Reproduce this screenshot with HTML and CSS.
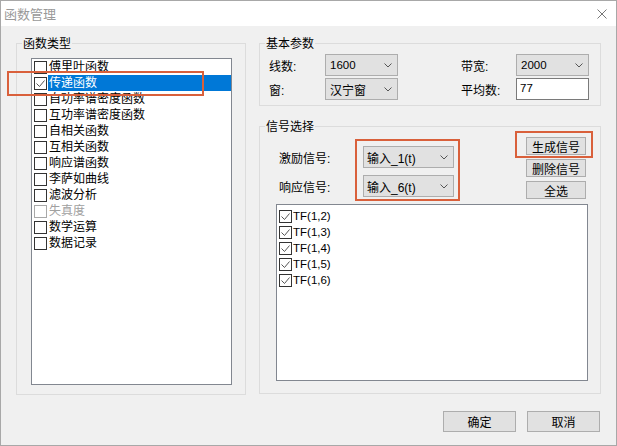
FILE: index.html
```html
<!DOCTYPE html>
<html lang="zh-CN">
<head>
<meta charset="utf-8">
<title>函数管理</title>
<link rel="stylesheet" href="styles.css">
</head>
<body>
<div class="window">
  <div class="titlebar">
    <span class="title">函数管理</span>
    <svg class="close" width="10" height="10" viewBox="0 0 10 10"><path d="M0.5 0.5 L9.5 9.5 M9.5 0.5 L0.5 9.5" stroke="#777" stroke-width="1" fill="none"/></svg>
  </div>
  <div class="main">
    <div class="group left-group">
      <span class="group-title">函数类型</span>
      <div class="listbox func-list">
        <div class="item"><span class="cb"></span><span class="txt">傅里叶函数</span></div>
        <div class="item"><span class="cb"><svg width="11" height="11" viewBox="0 0 11 11"><path d="M1.5 5.5 L4.5 8.5 L9.5 2.5" stroke="#555" stroke-width="1" fill="none"/></svg></span><span class="txt selected">传递函数</span></div>
        <div class="item"><span class="cb"></span><span class="txt">自功率谱密度函数</span></div>
        <div class="item"><span class="cb"></span><span class="txt">互功率谱密度函数</span></div>
        <div class="item"><span class="cb"></span><span class="txt">自相关函数</span></div>
        <div class="item"><span class="cb"></span><span class="txt">互相关函数</span></div>
        <div class="item"><span class="cb"></span><span class="txt">响应谱函数</span></div>
        <div class="item"><span class="cb"></span><span class="txt">李萨如曲线</span></div>
        <div class="item"><span class="cb"></span><span class="txt">滤波分析</span></div>
        <div class="item disabled"><span class="cb"></span><span class="txt">失真度</span></div>
        <div class="item"><span class="cb"></span><span class="txt">数学运算</span></div>
        <div class="item"><span class="cb"></span><span class="txt">数据记录</span></div>
      </div>
    </div>
    <div class="right-col">
      <div class="group basic-group">
        <span class="group-title">基本参数</span>
        <div class="param-grid">
          <span class="lbl">线数:</span>
          <div class="combo"><span class="val num">1600</span><svg class="chev" width="8" height="5" viewBox="0 0 8 5"><path d="M0.5 0.5 L4 4 L7.5 0.5" stroke="#555" fill="none"/></svg></div>
          <span></span>
          <span class="lbl">带宽:</span>
          <div class="combo"><span class="val num">2000</span><svg class="chev" width="8" height="5" viewBox="0 0 8 5"><path d="M0.5 0.5 L4 4 L7.5 0.5" stroke="#555" fill="none"/></svg></div>
          <span class="lbl">窗:</span>
          <div class="combo"><span class="val">汉宁窗</span><svg class="chev" width="8" height="5" viewBox="0 0 8 5"><path d="M0.5 0.5 L4 4 L7.5 0.5" stroke="#555" fill="none"/></svg></div>
          <span></span>
          <span class="lbl">平均数:</span>
          <div class="edit"><span class="num">77</span></div>
        </div>
      </div>
      <div class="group signal-group">
        <span class="group-title">信号选择</span>
        <div class="sig-top">
          <div class="sig-fields">
            <span class="lbl">激励信号:</span>
            <div class="combo"><span class="val">输入<span class="num sig-num">_1(t)</span></span><svg class="chev" width="8" height="5" viewBox="0 0 8 5"><path d="M0.5 0.5 L4 4 L7.5 0.5" stroke="#555" fill="none"/></svg></div>
            <span class="lbl">响应信号:</span>
            <div class="combo"><span class="val">输入<span class="num sig-num">_6(t)</span></span><svg class="chev" width="8" height="5" viewBox="0 0 8 5"><path d="M0.5 0.5 L4 4 L7.5 0.5" stroke="#555" fill="none"/></svg></div>
          </div>
          <div class="sig-buttons">
            <div class="btn small">生成信号</div>
            <div class="btn small">删除信号</div>
            <div class="btn small">全选</div>
          </div>
        </div>
        <div class="listbox tf-list">
          <div class="item"><span class="cb"><svg width="11" height="11" viewBox="0 0 11 11"><path d="M1.5 5.5 L4.5 8.5 L9.5 2.5" stroke="#555" stroke-width="1" fill="none"/></svg></span><span class="txt num">TF(1,2)</span></div>
          <div class="item"><span class="cb"><svg width="11" height="11" viewBox="0 0 11 11"><path d="M1.5 5.5 L4.5 8.5 L9.5 2.5" stroke="#555" stroke-width="1" fill="none"/></svg></span><span class="txt num">TF(1,3)</span></div>
          <div class="item"><span class="cb"><svg width="11" height="11" viewBox="0 0 11 11"><path d="M1.5 5.5 L4.5 8.5 L9.5 2.5" stroke="#555" stroke-width="1" fill="none"/></svg></span><span class="txt num">TF(1,4)</span></div>
          <div class="item"><span class="cb"><svg width="11" height="11" viewBox="0 0 11 11"><path d="M1.5 5.5 L4.5 8.5 L9.5 2.5" stroke="#555" stroke-width="1" fill="none"/></svg></span><span class="txt num">TF(1,5)</span></div>
          <div class="item"><span class="cb"><svg width="11" height="11" viewBox="0 0 11 11"><path d="M1.5 5.5 L4.5 8.5 L9.5 2.5" stroke="#555" stroke-width="1" fill="none"/></svg></span><span class="txt num">TF(1,6)</span></div>
        </div>
      </div>
    </div>
  </div>
  <div class="footer">
    <div class="btn big">确定</div>
    <div class="btn big">取消</div>
  </div>
  <div class="annot annot-func"></div>
  <div class="annot annot-combos"></div>
  <div class="annot annot-gen"></div>
</div>
</body>
</html>
```
FILE: styles.css
```css
html, body {
  margin: 0;
  padding: 0;
  background: #ffffff;
}
body {
  font-family: "Liberation Sans", "Noto Sans CJK SC", sans-serif;
  font-size: 12px;
  color: #000;
}
.window {
  position: relative;
  width: 617px;
  height: 446px;
  box-sizing: border-box;
  border: 1px solid #a8a8a8;
  background: #f0f0f0;
}
.titlebar {
  height: 25px;
  background: #ffffff;
  display: flex;
  align-items: center;
  padding-left: 3px;
}
.title {
  font-family: "Noto Sans CJK SC", sans-serif;
  font-size: 13px;
  color: #999;
  line-height: 16px;
}
.close {
  margin-left: auto;
  margin-right: 9px;
}
.main {
  display: flex;
  padding: 17px 0 0 15px;
  gap: 13px;
}
.group {
  position: relative;
  box-sizing: border-box;
  border: 1px solid #dcdcdc;
}
.group-title {
  position: absolute;
  top: -8px;
  left: 5px;
  padding: 0 1px;
  line-height: 14px;
  background: #f0f0f0;
  font-family: "Noto Sans CJK SC", sans-serif;
}
.left-group {
  width: 230px;
  height: 352px;
  padding: 14px 0 0 14px;
}
.listbox {
  box-sizing: border-box;
  border: 1px solid #828790;
  background: #fff;
  padding-left: 2px;
}
.func-list {
  width: 201px;
  height: 327px;
}
.item {
  display: flex;
  align-items: center;
  height: 16px;
  line-height: 16px;
}
.cb {
  flex: none;
  width: 13px;
  height: 13px;
  box-sizing: border-box;
  border: 1px solid #333;
  background: #fff;
  display: flex;
}
.txt {
  margin-left: 1px;
  padding-left: 1px;
  white-space: nowrap;
}
.txt.selected {
  flex: 1;
  background: #0078d7;
  color: #fff;
}
.item.disabled .txt {
  color: #a0a0a0;
}
.item.disabled .cb {
  border-color: #a8a8a8;
}
.right-col {
  width: 342px;
  display: flex;
  flex-direction: column;
  gap: 20px;
}
.basic-group {
  height: 63px;
  padding: 10px 11px 0 9px;
}
.param-grid {
  display: grid;
  grid-template-columns: 56px 73px 1fr 55px 73px;
  grid-template-rows: 22px 22px;
  row-gap: 2px;
  align-items: center;
}
.lbl {
  white-space: nowrap;
}
.combo {
  display: flex;
  align-items: center;
  height: 22px;
  box-sizing: border-box;
  border: 1px solid #adadad;
  background: #e1e1e1;
  padding: 0 5px 0 4px;
}
.combo .val {
  flex: 1;
  white-space: nowrap;
}
.num {
  font-size: 11.5px;
}
.sig-num {
  font-size: 12px;
}
.edit {
  height: 22px;
  box-sizing: border-box;
  border: 1px solid #7a7a7a;
  background: #fff;
  padding: 1px 3px;
  line-height: 16px;
}
.signal-group {
  height: 268px;
  padding: 10px 12px 0 16px;
}
.sig-top {
  display: flex;
  height: 67px;
}
.sig-fields {
  margin-top: 9px;
  padding-left: 3px;
  display: grid;
  grid-template-columns: 84px 91px;
  grid-template-rows: 22px 22px;
  row-gap: 7px;
  align-items: center;
  align-self: flex-start;
}
.sig-fields .combo {
  padding-left: 3px;
}
.sig-buttons {
  margin-left: auto;
  margin-right: 2px;
  display: flex;
  flex-direction: column;
  gap: 4px;
}
.btn {
  box-sizing: border-box;
  border: 1px solid #adadad;
  background: #e1e1e1;
  display: flex;
  align-items: center;
  justify-content: center;
}
.btn.small {
  width: 60px;
  height: 18px;
}
.btn.big {
  width: 73px;
  height: 21px;
}
.tf-list {
  width: 312px;
  height: 177px;
  padding-top: 3px;
}
.tf-list .txt {
  margin-left: 1px;
  padding-left: 0;
}
.footer {
  display: flex;
  justify-content: flex-end;
  gap: 11px;
  padding-right: 16px;
  margin-top: 16px;
}
.annot {
  position: absolute;
  box-sizing: border-box;
  border: 2px solid #d9603b;
}
.annot-func {
  left: 6px;
  top: 70px;
  width: 197px;
  height: 25px;
}
.annot-combos {
  left: 354px;
  top: 138px;
  width: 105px;
  height: 62px;
}
.annot-gen {
  left: 514px;
  top: 130px;
  width: 78px;
  height: 27px;
}
```
